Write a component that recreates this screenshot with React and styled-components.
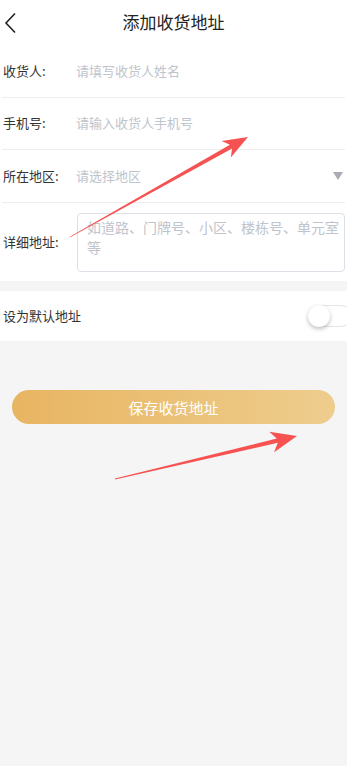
import React from 'react'
import styled, { createGlobalStyle } from 'styled-components'

const GlobalStyle = createGlobalStyle`
    html, body {
        margin: 0;
        padding: 0;
        background: #f5f5f5;
        overflow: hidden;
    }
    body {
        font-family: "Noto Sans CJK SC", "Noto Sans", sans-serif;
    }
`

const Page = styled.div`
    position: relative;
    width: 347px;
    height: 766px;
    background: #f5f5f5;
    overflow: hidden;
`

const Header = styled.div`
    height: 45px;
    background: #fff;
    display: flex;
    align-items: center;
    justify-content: center;
    position: relative;
`

const BackButton = styled.div`
    position: absolute;
    left: 2px;
    top: 10px;
    width: 16px;
    height: 26px;
    display: flex;
    align-items: center;
`

const Title = styled.div`
    font-size: 17px;
    color: #222;
    margin-top: -3px;
`

const Form = styled.div`
    background: #fff;
    padding: 0 2px;
`

const Row = styled.div`
    display: flex;
    align-items: center;
    box-sizing: border-box;
    height: ${p => p.$h || 52}px;
    border-bottom: ${p => (p.$last ? 'none' : '1px solid #eeeeee')};
`

const Label = styled.div`
    width: 73px;
    flex-shrink: 0;
    padding-left: 1px;
    font-size: 13px;
    color: #333;
    margin-top: -2px;
`

const Placeholder = styled.div`
    flex: 1;
    font-size: 13px;
    color: #c0c4cc;
    margin-top: -2px;
`

const Triangle = styled.div`
    width: 0;
    height: 0;
    margin-right: 2px;
    border-left: 5px solid transparent;
    border-right: 5px solid transparent;
    border-top: 8px solid #a9acb4;
`

const TextArea = styled.div`
    flex: 1;
    box-sizing: border-box;
    height: 59px;
    margin-left: 1px;
    border: 1px solid #dcdfe6;
    border-radius: 4px;
    padding: 3px 4px 5px 9px;
    font-size: 14px;
    line-height: 20px;
    color: #c0c4cc;
`

const Gap = styled.div`
    height: 10px;
`

const SwitchRow = styled.div`
    height: 50px;
    background: #fff;
    display: flex;
    align-items: center;
    justify-content: space-between;
    padding-left: 3px;
`

const SwitchText = styled.div`
    font-size: 13px;
    color: #333;
    margin-top: -2px;
`

const Switch = styled.div`
    position: relative;
    width: 44px;
    height: 22px;
    box-sizing: border-box;
    border: 1px solid #e4e4e4;
    border-radius: 11px;
    background: #fff;
    margin-right: -5px;
`

const Knob = styled.div`
    position: absolute;
    left: -1px;
    top: -1px;
    width: 22px;
    height: 22px;
    border-radius: 50%;
    background: #fff;
    box-shadow: 0 2px 4px rgba(0, 0, 0, 0.25);
`

const ButtonWrap = styled.div`
    padding: 49px 12px 0 12px;
`

const SaveButton = styled.div`
    height: 34px;
    border-radius: 17px;
    background: linear-gradient(90deg, #e8b562 0%, #eecd8d 100%);
    color: #fff;
    font-size: 15px;
    display: flex;
    align-items: center;
    justify-content: center;
`

const Overlay = styled.svg`
    position: absolute;
    left: 0;
    top: 0;
    pointer-events: none;
`

function arrowPoints(tx, ty, px, py, headLen, headHalf, shaftHalf) {
    const dx = px - tx
    const dy = py - ty
    const len = Math.hypot(dx, dy)
    const ux = dx / len
    const uy = dy / len
    const nx = -uy
    const ny = ux
    const bx = px - headLen * ux
    const by = py - headLen * uy
    const cx = px - headLen * 0.78 * ux
    const cy = py - headLen * 0.78 * uy
    const pts = [
        [tx + nx * 0.4, ty + ny * 0.4],
        [cx + nx * shaftHalf, cy + ny * shaftHalf],
        [bx + nx * headHalf, by + ny * headHalf],
        [px, py],
        [bx - nx * headHalf, by - ny * headHalf],
        [cx - nx * shaftHalf, cy - ny * shaftHalf],
        [tx - nx * 0.4, ty - ny * 0.4],
    ]
    return pts.map(p => p.join(',')).join(' ')
}

const fields = [
    { label: '收货人:', hint: '请填写收货人姓名', h: 53 },
    { label: '手机号:', hint: '请输入收货人手机号', h: 52 },
    { label: '所在地区:', hint: '请选择地区', h: 53, select: true },
]

export default function App() {
    return (
        <Page>
            <GlobalStyle />
            <Header>
                <BackButton>
                    <svg width="16" height="26" viewBox="0 0 16 26">
                        <path d="M13 3.5 L4 13 L13 22.5" fill="none" stroke="#222" strokeWidth="1.6" />
                    </svg>
                </BackButton>
                <Title>添加收货地址</Title>
            </Header>
            <Form>
                {fields.map(f => (
                    <Row key={f.label} $h={f.h}>
                        <Label>{f.label}</Label>
                        <Placeholder>{f.hint}</Placeholder>
                        {f.select && <Triangle />}
                    </Row>
                ))}
                <Row $h={78} $last>
                    <Label>详细地址:</Label>
                    <TextArea>如道路、门牌号、小区、楼栋号、单元室等</TextArea>
                </Row>
            </Form>
            <Gap />
            <SwitchRow>
                <SwitchText>设为默认地址</SwitchText>
                <Switch>
                    <Knob />
                </Switch>
            </SwitchRow>
            <ButtonWrap>
                <SaveButton>保存收货地址</SaveButton>
            </ButtonWrap>
            <Overlay width="347" height="766">
                <polygon points={arrowPoints(70, 237, 248, 137, 25, 9.4, 2.2)} fill="#f75252" />
                <polygon points={arrowPoints(115, 479, 297, 436, 26, 10.5, 2.2)} fill="#f75252" />
            </Overlay>
        </Page>
    )
}
